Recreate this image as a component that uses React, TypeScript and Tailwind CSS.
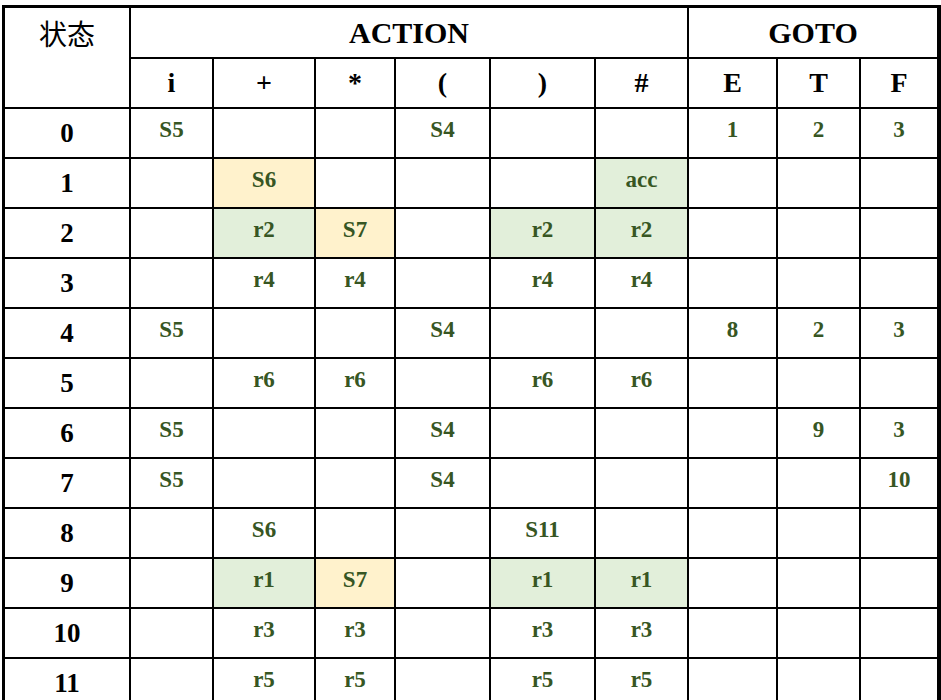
import React from "react"

type Cell = { v: string; bg?: "g" | "y" }

const cols = ["i", "+", "*", "(", ")", "#", "E", "T", "F"]

// one row per state, in column order i + * ( ) # E T F
const rows: Cell[][] = [
  [{ v: "S5" }, { v: "" }, { v: "" }, { v: "S4" }, { v: "" }, { v: "" }, { v: "1" }, { v: "2" }, { v: "3" }],
  [{ v: "" }, { v: "S6", bg: "y" }, { v: "" }, { v: "" }, { v: "" }, { v: "acc", bg: "g" }, { v: "" }, { v: "" }, { v: "" }],
  [{ v: "" }, { v: "r2", bg: "g" }, { v: "S7", bg: "y" }, { v: "" }, { v: "r2", bg: "g" }, { v: "r2", bg: "g" }, { v: "" }, { v: "" }, { v: "" }],
  [{ v: "" }, { v: "r4" }, { v: "r4" }, { v: "" }, { v: "r4" }, { v: "r4" }, { v: "" }, { v: "" }, { v: "" }],
  [{ v: "S5" }, { v: "" }, { v: "" }, { v: "S4" }, { v: "" }, { v: "" }, { v: "8" }, { v: "2" }, { v: "3" }],
  [{ v: "" }, { v: "r6" }, { v: "r6" }, { v: "" }, { v: "r6" }, { v: "r6" }, { v: "" }, { v: "" }, { v: "" }],
  [{ v: "S5" }, { v: "" }, { v: "" }, { v: "S4" }, { v: "" }, { v: "" }, { v: "" }, { v: "9" }, { v: "3" }],
  [{ v: "S5" }, { v: "" }, { v: "" }, { v: "S4" }, { v: "" }, { v: "" }, { v: "" }, { v: "" }, { v: "10" }],
  [{ v: "" }, { v: "S6" }, { v: "" }, { v: "" }, { v: "S11" }, { v: "" }, { v: "" }, { v: "" }, { v: "" }],
  [{ v: "" }, { v: "r1", bg: "g" }, { v: "S7", bg: "y" }, { v: "" }, { v: "r1", bg: "g" }, { v: "r1", bg: "g" }, { v: "" }, { v: "" }, { v: "" }],
  [{ v: "" }, { v: "r3" }, { v: "r3" }, { v: "" }, { v: "r3" }, { v: "r3" }, { v: "" }, { v: "" }, { v: "" }],
  [{ v: "" }, { v: "r5" }, { v: "r5" }, { v: "" }, { v: "r5" }, { v: "r5" }, { v: "" }, { v: "" }, { v: "" }],
]

const serif = "font-['Liberation_Serif','Times_New_Roman',serif]"

export default function App() {
  return (
    <div className="h-[700px] w-[941px] overflow-hidden bg-white">
      <div
        className={`ml-[2px] mt-[5px] grid grid-cols-[126px_83px_102px_80px_95px_105px_93px_89px_83px_80px] grid-rows-[51px_repeat(13,50px)] border-l-[3px] border-t-[3px] border-black ${serif}`}
      >
        <div className="row-span-2 border-b-2 border-r-2 border-black">
          <div className="flex h-[49px] items-center justify-center font-['Noto_Sans_CJK_SC',sans-serif] text-[28px] text-black">
            状态
          </div>
        </div>
        <div className="col-span-6 flex items-center justify-center border-b-2 border-r-2 border-black text-[30px] font-bold text-black">
          ACTION
        </div>
        <div className="col-span-3 flex items-center justify-center border-b-2 border-r-4 border-black text-[30px] font-bold text-black">
          GOTO
        </div>

        {cols.map((c, i) => (
          <div
            key={c}
            className={`flex items-center justify-center border-b-2 border-black text-[28px] font-bold text-black ${
              i === cols.length - 1 ? "border-r-4" : "border-r-2"
            }`}
          >
            {c}
          </div>
        ))}

        {rows.map((row, r) => (
          <React.Fragment key={r}>
            <div className="flex items-center justify-center border-b-2 border-r-2 border-black text-[27px] font-bold text-black">
              {r}
            </div>
            {row.map((cell, i) => (
              <div
                key={i}
                className={`flex items-center justify-center border-b-2 border-black pb-[6px] text-[23px] font-bold text-[#375623] ${
                  i === row.length - 1 ? "border-r-4" : "border-r-2"
                } ${cell.bg === "g" ? "bg-[#e2efda]" : cell.bg === "y" ? "bg-[#fff2cc]" : "bg-white"}`}
              >
                {cell.v}
              </div>
            ))}
          </React.Fragment>
        ))}
      </div>
    </div>
  )
}
